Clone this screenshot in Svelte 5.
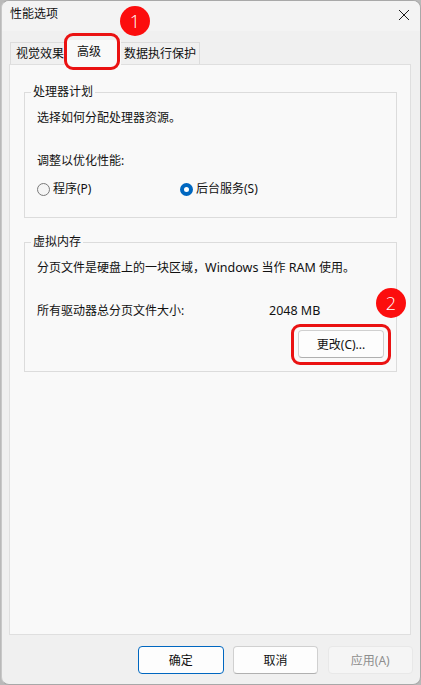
<script>
  const tabs = ['视觉效果', '高级', '数据执行保护'];
</script>

<div class="window">
  <header class="titlebar">
    <span class="title">性能选项</span>
    <svg class="close" width="12" height="12" viewBox="0 0 12 12"><path d="M1 1 L11 11 M11 1 L1 11" stroke="#1a1a1a" stroke-width="1" fill="none"/></svg>
  </header>

  <main class="body">
    <nav class="tabs">
      {#each tabs as t, i}
        <div class="tab" class:active={i === 1}>{t}</div>
      {/each}
      <span class="ring ring-tab"></span>
      <span class="badge badge-1">1</span>
    </nav>

    <section class="panel">
      <fieldset class="group first">
        <legend>处理器计划</legend>
        <p class="line intro">选择如何分配处理器资源。</p>
        <p class="line adjust">调整以优化性能:</p>
        <div class="radios">
          <label class="radio r1"><span class="dot"></span>程序(P)</label>
          <label class="radio"><span class="dot on"></span>后台服务(S)</label>
        </div>
      </fieldset>

      <fieldset class="group second">
        <legend>虚拟内存</legend>
        <p class="line intro">分页文件是硬盘上的一块区域，<span class="lat">Windows</span> 当作 <span class="lat">RAM</span> 使用。</p>
        <div class="line size"><span class="size-label">所有驱动器总分页文件大小:</span><span class="lat">2048 MB</span></div>
        <div class="change-row">
          <button class="btn change">更改(C)...</button>
          <span class="ring ring-btn"></span>
          <span class="badge badge-2">2</span>
        </div>
      </fieldset>
    </section>

    <footer class="actions">
      <button class="btn primary">确定</button>
      <button class="btn">取消</button>
      <button class="btn disabled">应用(A)</button>
    </footer>
  </main>
</div>

<style>
  :global(body) {
    margin: 0;
    background: #b9b9b9;
    font-family: "Noto Sans", "Noto Sans CJK SC", sans-serif;
    font-size: 12px;
    color: #111;
  }
  .window {
    box-sizing: border-box;
    width: 420px;
    height: 685px;
    margin-left: 1px;
    background: #f0f0f0;
    border-radius: 8px;
    border: 1px solid #a8a8a8;
    border-left-color: #c8c8c8;
    overflow: hidden;
    display: flex;
    flex-direction: column;
  }
  .titlebar {
    height: 30px;
    flex: none;
    background: #f3f3f3;
    display: flex;
    align-items: center;
    justify-content: space-between;
    padding: 0 10px 0 8px;
  }
  .title { font-size: 12px; position: relative; top: -3px; }
  .close { position: relative; top: -1px; }
  .body {
    flex: 1;
    display: flex;
    flex-direction: column;
    padding: 11px 9px 0 7px;
  }
  .tabs {
    position: relative;
    display: flex;
    align-items: flex-end;
    height: 22px;
    padding-left: 2px;
    flex: none;
  }
  .tab {
    box-sizing: border-box;
    height: 22px;
    padding: 0 3px;
    line-height: 21px;
    background: #f0f0f0;
    border: 1px solid #dcdcdc;
    border-bottom: none;
    margin-left: -1px;
  }
  .tab:first-child { padding: 0 0 0 5px; }
  .tab.active {
    height: 25px;
    margin-bottom: -1px;
    padding: 0 19px 0 12px;
    line-height: 21px;
    background: #f9f9f9;
    border-color: transparent;
    position: relative;
    z-index: 2;
  }
  .panel {
    box-sizing: border-box;
    height: 571px;
    flex: none;
    background: #f9f9f9;
    border: 1px solid #dfdfdf;
    padding: 18px 13px 0 14px;
    display: flex;
    flex-direction: column;
  }
  .group {
    margin: 0;
    padding: 0 12px;
    border: 1px solid #dcdcdc;
    min-width: 0;
    position: relative;
    box-sizing: border-box;
  }
  .group legend {
    padding: 0 2px;
    margin-left: -6px;
    line-height: 18px;
    font-size: 12px;
  }
  .first { height: 135px; }
  .second { height: 139px; margin-top: 15px; }
  .line { margin: 0; line-height: 18px; }
  .line.intro { margin-top: 8px; }
  .line.adjust { margin-top: 25px; }
  .radios { display: flex; margin-top: 10px; }
  .radio { display: flex; align-items: center; gap: 3px; line-height: 18px; }
  .r1 { width: 143px; }
  .dot {
    box-sizing: border-box;
    width: 13px;
    height: 13px;
    border-radius: 50%;
    border: 1px solid #7a7a7a;
    background: #f5f5f5;
  }
  .dot.on { border: 4px solid #0067c0; background: #fff; }
  .lat { font-size: 12.5px; }
  .line.size { margin-top: 25px; display: flex; }
  .size-label { width: 232px; }
  .change-row {
    position: relative;
    display: flex;
    justify-content: flex-end;
    margin-top: 10px;
  }
  .btn {
    box-sizing: border-box;
    width: 85.5px;
    height: 28px;
    padding: 0;
    background: #fdfdfd;
    border: 1px solid #d0d0d0;
    border-bottom-color: #b0b0b0;
    border-radius: 4px;
    font: inherit;
    color: #111;
  }
  .btn.change { width: 86px; margin-right: 0; }
  .actions {
    flex: none;
    display: flex;
    justify-content: flex-end;
    gap: 9.25px;
    margin-top: 11px;
    margin-right: -2px;
  }
  .primary { border: 1px solid #0067c0; }
  .disabled { background: #f5f5f5; border-color: #e8e8e8; color: #8e8e8e; }
  .ring {
    position: absolute;
    box-sizing: border-box;
    border: 3px solid #ea1212;
    border-radius: 9px;
    z-index: 3;
    pointer-events: none;
  }
  .ring-tab { left: 55px; top: -9px; width: 56px; height: 37px; }
  .ring-btn { right: -7px; top: -6px; width: 100px; height: 41px; }
  .badge {
    position: absolute;
    width: 30px;
    height: 30px;
    border-radius: 50%;
    background: #fc0d0d;
    color: #fff;
    font-size: 18px;
    font-weight: 300;
    line-height: 30px;
    text-align: center;
    z-index: 4;
    font-family: "Open Sans", sans-serif;
  }
  .badge-1 { left: 111px; top: -36px; }
  .badge-2 { right: -22px; top: -42px; }
</style>
